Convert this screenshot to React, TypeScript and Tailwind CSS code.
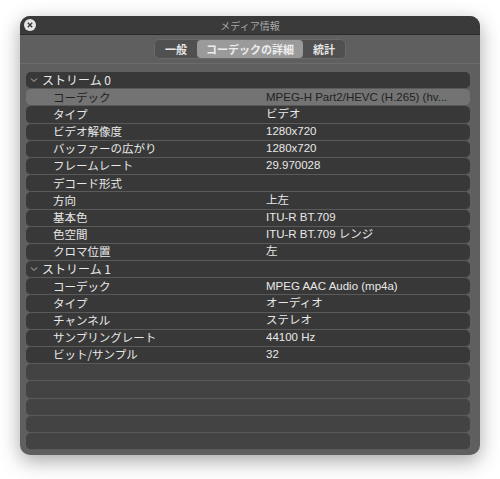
export default function App() {
  const rows: [string, string, number][] = [
    ["ストリーム 0", "", 0],
    ["コーデック", "MPEG-H Part2/HEVC (H.265) (hv...", 1],
    ["タイプ", "ビデオ", 1],
    ["ビデオ解像度", "1280x720", 1],
    ["バッファーの広がり", "1280x720", 1],
    ["フレームレート", "29.970028", 1],
    ["デコード形式", "", 1],
    ["方向", "上左", 1],
    ["基本色", "ITU-R BT.709", 1],
    ["色空間", "ITU-R BT.709 レンジ", 1],
    ["クロマ位置", "左", 1],
    ["ストリーム 1", "", 0],
    ["コーデック", "MPEG AAC Audio (mp4a)", 1],
    ["タイプ", "オーディオ", 1],
    ["チャンネル", "ステレオ", 1],
    ["サンプリングレート", "44100 Hz", 1],
    ["ビット/サンプル", "32", 1],
    ["", "", 2], ["", "", 2], ["", "", 2], ["", "", 2], ["", "", 2],
  ];
  return (
    <div className="w-[500px] h-[479px] bg-white pt-[16px] pl-[20px]" style={{ fontFamily: '"Noto Sans CJK JP", "Noto Sans", sans-serif' }}>
      <div className="w-[460px] h-[439px] rounded-[10px] overflow-hidden bg-[#5f5f5f] shadow-[0_6px_20px_rgba(0,0,0,0.35)] flex flex-col">
        <div className="h-[19px] shrink-0 bg-[#3a3a3a] border-b border-[#2a2a2a] relative flex items-center justify-center">
          <div className="absolute left-[4px] top-[3px] w-[12px] h-[12px] rounded-full bg-[#e6e6e6] flex items-center justify-center">
            <svg width="6" height="6" viewBox="0 0 6 6"><path d="M0.8 0.8L5.2 5.2M5.2 0.8L0.8 5.2" stroke="#3a3a3a" strokeWidth="1.4" /></svg>
          </div>
          <span className="text-[10px] text-[#a8a8a8]">メディア情報</span>
        </div>
        <div className="h-[29px] shrink-0 flex items-center justify-center border-b border-[#6c6c6c]">
          <div className="flex h-[20px] items-center rounded-[5px] bg-[#505050] border border-[#6a6a6a] text-[11px] font-bold text-[#e6e6e6]">
            <div className="px-[10px]">一般</div>
            <div className="px-[9px] h-[18px] flex items-center rounded-[4px] bg-[#9a9a9a] text-[#ececec]">コーデックの詳細</div>
            <div className="px-[10px]">統計</div>
          </div>
        </div>
        <div className="pt-[8px] pl-[6px] pr-[10px] flex flex-col">
          {rows.map(([k, v, t], i) => {
            const sel = i === 1;
            return (
              <div key={i} className={`h-[17.2px] shrink-0 rounded-[5px] border-b border-[#5a5a5a] flex items-center text-[11.5px] ${sel ? "bg-[#737373] text-[#222]" : t === 2 ? "bg-[#434343]" : "bg-[#383838] text-[#e8e8e8]"}`}>
                {t === 0 ? (
                  <div className="flex items-center pl-[4px] text-[12px]">
                    <svg width="8" height="6" viewBox="0 0 8 6" className="mr-[4px]"><path d="M1 1.5L4 4.5L7 1.5" stroke="#bbb" strokeWidth="1" fill="none" /></svg>
                    {k}
                  </div>
                ) : (
                  <>
                    <div className="w-[240px] pl-[27px]">{k}</div>
                    <div className="flex-1 truncate" style={{ fontFamily: '"Liberation Sans", "Noto Sans CJK JP", sans-serif' }}>{v}</div>
                  </>
                )}
              </div>
            );
          })}
        </div>
      </div>
    </div>
  );
}
